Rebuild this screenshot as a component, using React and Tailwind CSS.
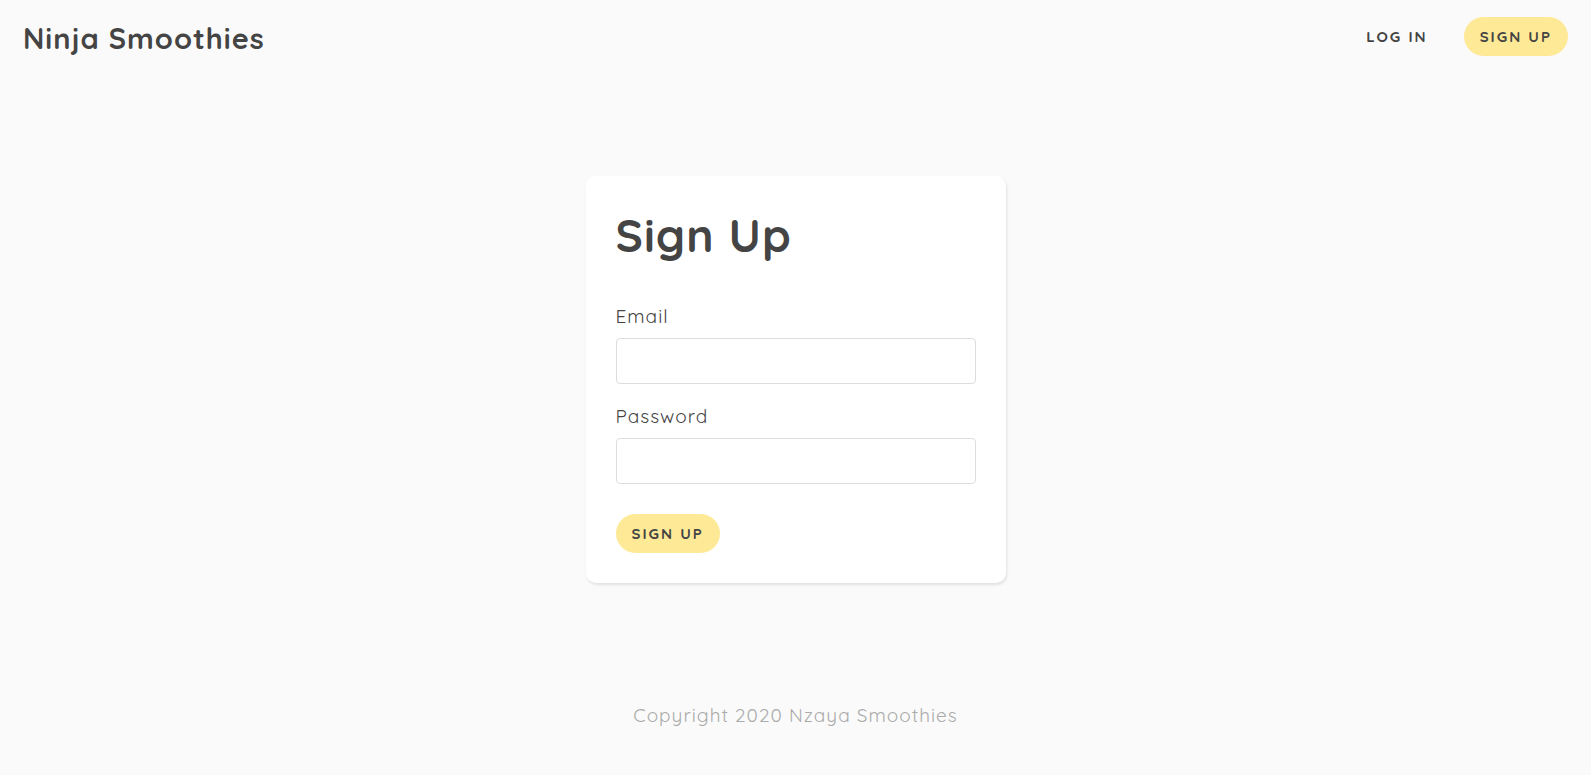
const pill =
  'rounded-full bg-[#fee996] px-4 py-2 text-[15px] leading-[23px] font-bold tracking-[2px] uppercase';

function Field({ id, label, type }) {
  return (
    <div className="mt-5">
      <label htmlFor={id} className="mb-2.5 block leading-6">
        {label}
      </label>
      <input
        id={id}
        name={id}
        type={type}
        required
        className="block h-[46px] w-full rounded border border-[#dddddd] bg-white px-2.5"
      />
    </div>
  );
}

export default function App() {
  return (
    <div className="flex min-h-screen flex-col bg-[#fafafa] font-['Quicksand','Lato',sans-serif] text-[19px] tracking-[1px] text-[#444444]">
      <nav className="flex items-start justify-between px-[23px] pt-[17px]">
        <a href="/" className="mt-1 text-[29px] leading-[34px] font-bold">
          Ninja Smoothies
        </a>
        <ul className="flex items-center gap-9">
          <li className="flex">
            <a href="/login" className="text-[15px] leading-[23px] font-bold tracking-[2px] uppercase">
              Log in
            </a>
          </li>
          <li className="flex">
            <a href="/signup" className={pill}>
              Sign up
            </a>
          </li>
        </ul>
      </nav>

      <main className="flex justify-center pt-[120px]">
        <form
          className="w-full max-w-[420px] rounded-[10px] bg-white p-[30px] shadow-[1px_2px_3px_rgba(0,0,0,0.1)]"
          onSubmit={(event) => event.preventDefault()}
        >
          <h1 className="mb-10 text-[46px] leading-[58px] font-bold">Sign Up</h1>
          <Field id="email" label="Email" type="text" />
          <Field id="password" label="Password" type="password" />
          <button type="submit" className={`mt-[30px] block ${pill}`}>
            Sign up
          </button>
        </form>
      </main>

      <footer className="px-6 pt-[120px] pb-12 text-center leading-6 text-[#aaaaaa]">
        Copyright 2020 Nzaya Smoothies
      </footer>
    </div>
  );
}
